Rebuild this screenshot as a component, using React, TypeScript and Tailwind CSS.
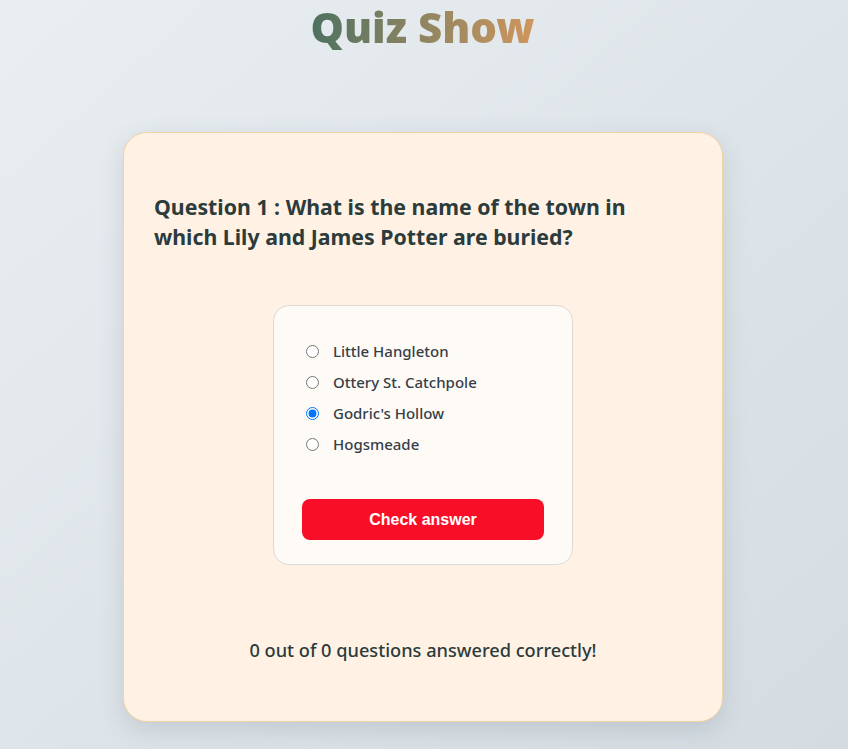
import { useState } from "react";

const options = ["Little Hangleton", "Ottery St. Catchpole", "Godric's Hollow", "Hogsmeade"];

export default function App() {
  const [picked, setPicked] = useState("Godric's Hollow");

  return (
    <div
      className="min-h-[749px] w-full bg-gradient-to-br from-[#e9eef1] to-[#d4dce2] pt-px pb-7"
      style={{ fontFamily: '"Noto Sans", "Open Sans", sans-serif' }}
    >
      <h1 className="-mt-[4px] text-center text-[42px] leading-[60px] font-black">
        <span className="-ml-[3px] inline-block bg-gradient-to-r from-[#467060] to-[#d4975c] bg-clip-text px-2 text-transparent">
          Quiz Show
        </span>
      </h1>

      <div className="mx-auto mt-[75px] flex h-[590px] w-[600px] -translate-x-px flex-col rounded-3xl border border-[#f0d4a4] bg-[#fff2e5] px-[30px] pt-[59px] shadow-[0_8px_24px_rgba(80,90,100,0.18)]">
        <h2 className="text-[21.3px] leading-[30px] font-bold text-[#2c3b3c]">
          Question 1 : What is the name of the town in
          <br />
          which Lily and James Potter are buried?
        </h2>

        <div className="mx-auto mt-[53px] flex h-[260px] w-[300px] flex-col rounded-2xl border border-[#dddad6] bg-[#fefbf7] px-[28px] pt-[33px]">
          <div className="flex flex-col gap-[7px] pl-[4px]">
            {options.map((o) => (
              <label key={o} className="flex h-[24px] items-center gap-[14px] text-[15px] font-medium text-[#363e48]">
                <input
                  type="radio"
                  name="answer"
                  checked={picked === o}
                  onChange={() => setPicked(o)}
                  className="m-0 h-[13px] w-[13px]"
                />
                {o}
              </label>
            ))}
          </div>
          <button
            className="mt-[43px] h-[41px] w-full rounded-lg bg-[#f80f27] text-[16px] font-bold text-white"
            style={{ fontFamily: '"Liberation Sans", Arial, sans-serif' }}
          >
            Check answer
          </button>
        </div>

        <p className="mt-[72px] text-center text-[18.2px] font-medium text-[#2c3b3c]">
          0 out of 0 questions answered correctly!
        </p>
      </div>
    </div>
  );
}
